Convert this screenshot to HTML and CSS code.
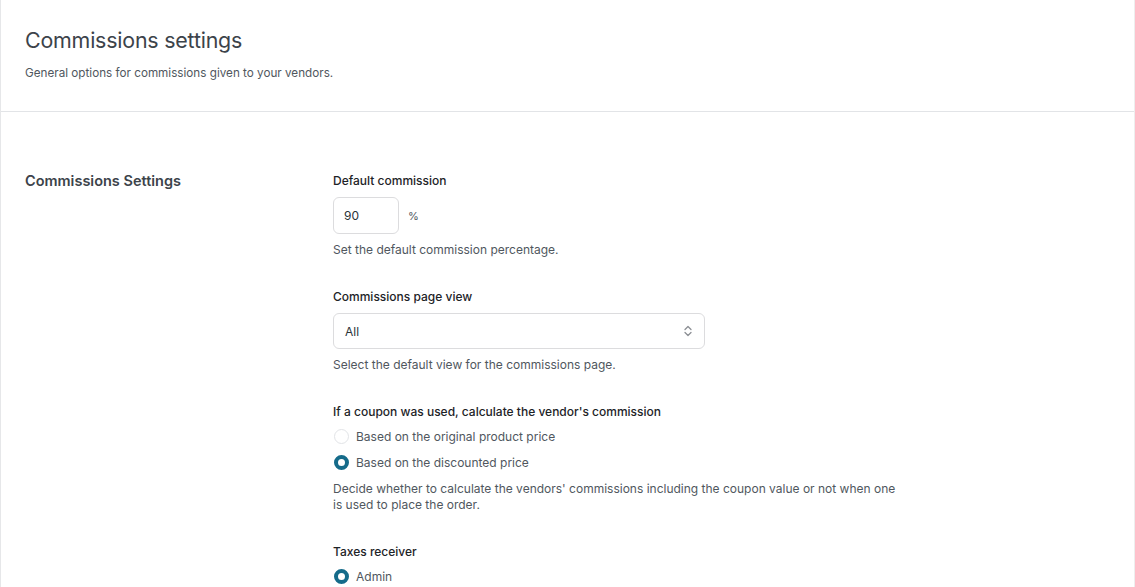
FILE: index.html
```html
<!DOCTYPE html>
<html lang="en">
<head>
<meta charset="utf-8">
<title>Commissions settings</title>
<link rel="stylesheet" href="styles.css">
</head>
<body>
<div class="page">
  <header class="header">
    <h1 class="title">Commissions settings</h1>
    <p class="subtitle">General options for commissions given to your vendors.</p>
  </header>
  <section class="section">
    <h2 class="section-title">Commissions Settings</h2>
    <div class="fields">
      <div class="field">
        <div class="label">Default commission</div>
        <div class="inline">
          <div class="input num">90</div>
          <span class="unit">%</span>
        </div>
        <p class="help">Set the default commission percentage.</p>
      </div>
      <div class="field">
        <div class="label">Commissions page view</div>
        <div class="input select">
          <span>All</span>
          <svg class="chev" width="10" height="14" viewBox="0 0 10 14"><path d="M2 5.5 L5 2.5 L8 5.5 M2 8.5 L5 11.5 L8 8.5" fill="none" stroke="#8c8f94" stroke-width="1.3" stroke-linecap="round" stroke-linejoin="round"/></svg>
        </div>
        <p class="help">Select the default view for the commissions page.</p>
      </div>
      <div class="field">
        <div class="label">If a coupon was used, calculate the vendor's commission</div>
        <div class="radios">
          <div class="radio-row"><span class="radio"></span><span>Based on the original product price</span></div>
          <div class="radio-row"><span class="radio on"></span><span>Based on the discounted price</span></div>
        </div>
        <p class="help wide">Decide whether to calculate the vendors' commissions including the coupon value or not when one is used to place the order.</p>
      </div>
      <div class="field">
        <div class="label">Taxes receiver</div>
        <div class="radios">
          <div class="radio-row"><span class="radio on"></span><span>Admin</span></div>
        </div>
      </div>
    </div>
  </section>
</div>
</body>
</html>
```

FILE: styles.css
```css
html, body {
  margin: 0;
  padding: 0;
  background: #ffffff;
}
body {
  font-family: Inter, "Noto Sans", "Liberation Sans", sans-serif;
  color: #3c434a;
}
.page {
  border-left: 1px solid #e6e7e9;
  border-right: 1px solid #eeeeee;
  min-height: 587px;
  box-sizing: border-box;
}
.header {
  padding: 26px 24px 0;
  height: 112px;
  box-sizing: border-box;
  border-bottom: 1px solid #e2e4e7;
}
.title {
  margin: 0;
  font-size: 21.4px;
  line-height: 28px;
  font-weight: 400;
  color: #3c434a;
  letter-spacing: -0.2px;
}
.subtitle {
  margin: 11px 0 0;
  font-size: 11.7px;
  line-height: 16px;
  color: #50575e;
}
.section {
  display: grid;
  grid-template-columns: 308px 1fr;
  padding: 61px 24px 0;
}
.section-title {
  margin: 0;
  font-size: 14.5px;
  line-height: 16px;
  font-weight: 600;
  color: #3c434a;
}
.fields {
  display: flex;
  flex-direction: column;
  gap: 31px;
}
.label {
  font-size: 12px;
  line-height: 16px;
  font-weight: 500;
  color: #1d2327;
}
.inline {
  display: flex;
  align-items: center;
  gap: 9px;
  margin-top: 8px;
}
.input {
  border: 1px solid #dcdcde;
  border-radius: 6px;
  box-sizing: border-box;
  font-size: 12px;
  color: #2c3338;
  display: flex;
  align-items: center;
}
.num {
  width: 66px;
  height: 37px;
  padding-left: 10px;
}
.unit {
  font-size: 11px;
  color: #50575e;
}
.select {
  margin-top: 8px;
  width: 372px;
  height: 36px;
  padding: 0 11px 0 11px;
  justify-content: space-between;
}
.help {
  margin: 8px 0 0;
  font-size: 12px;
  line-height: 16px;
  color: #50575e;
  max-width: 560px;
}
.help.wide {
  max-width: 567px;
}
.radios {
  display: flex;
  flex-direction: column;
  margin-top: 3px;
}
.radio-row {
  display: flex;
  align-items: center;
  gap: 7px;
  height: 26px;
  font-size: 12px;
  color: #50575e;
}
.radio {
  width: 15px;
  height: 15px;
  border-radius: 50%;
  border: 1px solid #e2e4e7;
  box-sizing: border-box;
  margin-left: 1px;
}
.radio.on {
  border: 4.5px solid #156b8a;
  background: #ffffff;
}
.radios + .help {
  margin-top: 6px;
}
```
